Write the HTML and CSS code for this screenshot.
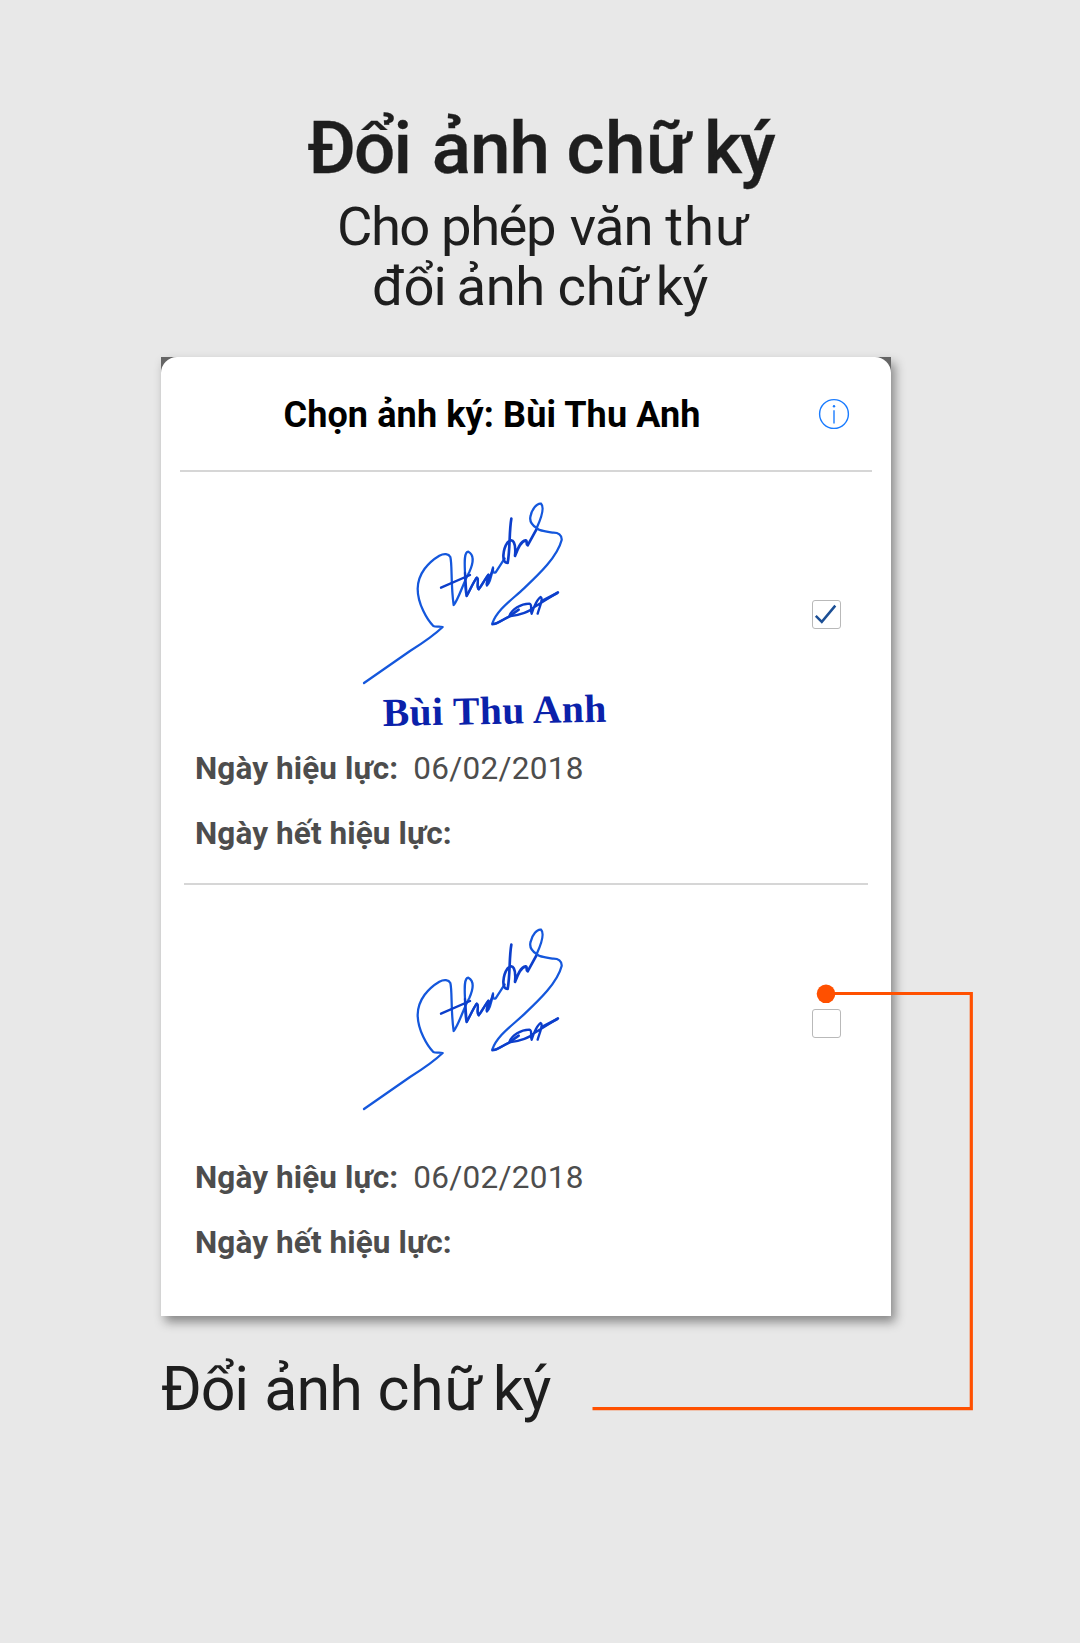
FILE: index.html
```html
<!DOCTYPE html>
<html lang="vi">
<head>
<meta charset="utf-8">
<title>Đổi ảnh chữ ký</title>
<link rel="stylesheet" href="styles.css">
</head>
<body>
<svg width="0" height="0" class="defs" aria-hidden="true">
  <defs>
    <g id="signature" fill="none" stroke-linecap="round" stroke-linejoin="round">
      <path stroke="#1457dc" stroke-width="6.8" d="M42 579L180 483C215 461 249 439 278 411C268 408 258 412 250 408C232 390 203 342 203 296C204 250 236 216 268 197C282 190 296 191 301 201C307 222 302 285 311 345C325 330 341 275 358 246C370 219 374 195 355 185C341 186 344 223 345 249C345 277 345 305 350 318C360 300 368 281 380 263C390 267 377 288 386 298C398 285 402 270 415 254C419 258 407 279 411 286C419 282 425 256 429 232C428 243 430 251 437 247L464 205"/>
      <path stroke="#0c3ecb" stroke-width="7" d="M273 293L360 255M345 249L350 318C360 300 368 281 380 263C390 267 377 288 386 298L415 254C419 258 407 279 411 286L429 236"/>
      <path stroke="#0c3ecb" stroke-width="8" d="M484 86C477 126 481 173 473 219C453 219 459 177 473 157C489 141 499 160 495 198C503 176 512 153 527 151C534 154 526 160 533 166L561 115"/>
      <path stroke="#1457dc" stroke-width="6.8" d="M561 115C545 105 537 93 542 77C546 57 562 38 573 41C583 51 575 81 561 112C558 121 590 124 608 128C625 127 636 135 635 150C622 200 570 250 522 295C485 330 442 358 427 400C437 409 454 388 482 378"/>
      <path stroke="#0c3ecb" stroke-width="7" d="M427 403C441 402 460 388 482 378C510 376 540 364 552 352L624 307M478 378C486 357 512 342 538 341C549 343 539 359 545 371C551 350 563 326 572 321C581 325 568 352 563 371"/>
      <path stroke="#0c3ecb" stroke-width="8" d="M482 376L506 359M576 333L622 309"/>
    </g>
  </defs>
</svg>
<main class="page">
  <h1 class="title"><span>Đổi</span> <span>ảnh</span> <span>chữ</span> <span>ký</span></h1>
  <p class="subtitle first"><span>Cho</span> <span>phép</span> <span>văn</span> <span>thư</span></p>
  <p class="subtitle last"><span>đổi</span> <span>ảnh</span> <span>chữ</span> <span>ký</span></p>

  <section class="card">
    <div class="sheet">
      <header class="sheet-header">
        <h2 class="sheet-title">Chọn ảnh ký: Bùi Thu Anh</h2>
        <svg class="info" viewBox="0 0 32 32"><circle cx="16" cy="16" r="14.4"/><path d="M16 12.2V25.5"/><circle class="info-dot" cx="16" cy="8.3" r="1.2"/></svg>
      </header>
      <article class="item">
        <div class="item-main">
          <svg class="sign" viewBox="0 0 840 750"><use href="#signature"/><text class="sign-name" x="99" y="708" textLength="671" transform="rotate(-1.1 99 708)">Bùi Thu Anh</text></svg>
          <span class="checkbox"><svg viewBox="0 0 29 29"><path d="M3.8 15.8L9.8 21.8L23.3 5.6"/></svg></span>
        </div>
        <p class="row"><b>Ngày hiệu lực:</b><span class="date">06/02/2018</span></p>
        <p class="row"><b>Ngày hết hiệu lực:</b></p>
      </article>
      <article class="item second">
        <div class="item-main">
          <svg class="sign" viewBox="0 0 840 750"><use href="#signature"/></svg>
          <span class="checkbox"></span>
        </div>
        <p class="row"><b>Ngày hiệu lực:</b><span class="date">06/02/2018</span></p>
        <p class="row"><b>Ngày hết hiệu lực:</b></p>
      </article>
    </div>
  </section>

  <p class="caption"><span>Đổi</span> <span>ảnh</span> <span>chữ</span> <span>ký</span></p>
  <svg class="connector" viewBox="0 0 400 440"><path d="M246 14.5H391.3V429.6H12.5"/><circle cx="246" cy="14.8" r="9.3"/></svg>
</main>
</body>
</html>
```
FILE: styles.css
```css
* { box-sizing: border-box; }
body { margin: 0; background: #e8e8e8; font-family: Roboto, "Liberation Sans", sans-serif; color: #1e1e1e; }
h1, h2, p { margin: 0; font-weight: 400; white-space: nowrap; }
.defs { display: block; }
.page { position: relative; width: 1080px; height: 1643px; padding-top: 106px; }

.title { padding-left: 307.5px; font-size: 72.8px; line-height: 84px; font-weight: 500; -webkit-text-stroke: .3px #1e1e1e; }
.title span:nth-child(1) { letter-spacing: -2px; margin-right: 3.6px; }
.title span:nth-child(2) { letter-spacing: -.9px; margin-right: -.8px; }
.title span:nth-child(3) { letter-spacing: .5px; margin-right: -5.2px; }
.title span:nth-child(4) { letter-spacing: -1.8px; }

.subtitle { font-size: 54.4px; line-height: 60px; }
.first { margin-top: 7px; padding-left: 337px; }
.first span:nth-child(1) { letter-spacing: -1.5px; margin-right: -1.3px; }
.first span:nth-child(2) { letter-spacing: -1.5px; margin-right: 1.2px; }
.first span:nth-child(3) { letter-spacing: -.9px; margin-right: -.7px; }
.first span:nth-child(4) { letter-spacing: .9px; }
.last { padding-left: 372px; }
.last span:nth-child(1) { letter-spacing: -1px; margin-right: -2.8px; }
.last span:nth-child(2) { letter-spacing: -.4px; margin-right: -.8px; }
.last span:nth-child(3) { letter-spacing: -.2px; margin-right: -6.8px; }
.last span:nth-child(4) { letter-spacing: -.9px; }

.card { width: 730px; height: 959px; margin: 40px 0 0 161px; background: #656565; box-shadow: 4px 6px 10px rgba(0, 0, 0, .42); }
.sheet { height: 100%; background: #fff; border-radius: 16px 16px 0 0; }
.sheet-header { display: flex; justify-content: space-between; height: 114.5px; margin: 0 19px 0 18.5px; padding: 36px 22px 0 104px; border-bottom: 2px solid #d6d6d6; }
.sheet-title { font-size: 36px; line-height: 44px; font-weight: 700; color: #000; letter-spacing: .11px; }
.info { width: 32px; height: 32px; margin-top: 4.5px; fill: none; stroke: #1a7cff; stroke-width: 1.4; }
.info-dot { fill: #1a7cff; stroke: none; }
.item { margin: 0 23px; border-bottom: 2px solid #d6d6d6; height: 413.5px; }
.second { border: 0; }
.item-main { display: flex; justify-content: space-between; height: 264.5px; padding: 18.5px 27.5px 0 166px; }
.second .item-main { height: 260px; padding-top: 31.3px; }
.sign { width: 280px; height: 250px; flex: none; }
.sign-name { font: 700 119px "Liberation Serif", serif; fill: #0a21aa; }
.checkbox { width: 29px; height: 29px; margin-top: 110px; border: 1.3px solid #b9b9b9; border-radius: 3px; }
.checkbox svg { display: block; width: 29px; height: 29px; margin: -1px; fill: none; stroke: #1c4f95; stroke-width: 2.5; }
.second .checkbox { margin-top: 93px; }
.row { display: flex; gap: 15px; padding-left: 11px; font-size: 31.5px; line-height: 65px; color: #4d4d4d; }
.row b { font-weight: 700; letter-spacing: .1px; }
.date { letter-spacing: .3px; }

.caption { margin: 41px 0 0 161px; font-size: 61px; line-height: 64px; }
.caption span:nth-child(1) { letter-spacing: -1.2px; margin-right: 1.2px; }
.caption span:nth-child(2) { letter-spacing: -1px; margin-right: .6px; }
.caption span:nth-child(3) { letter-spacing: .6px; margin-right: -5px; }
.caption span:nth-child(4) { letter-spacing: -1px; }
.connector { position: absolute; left: 580px; top: 979px; width: 400px; height: 440px; fill: none; stroke: #ff5000; stroke-width: 3.2; }
.connector circle { fill: #ff5000; stroke: none; }
```
